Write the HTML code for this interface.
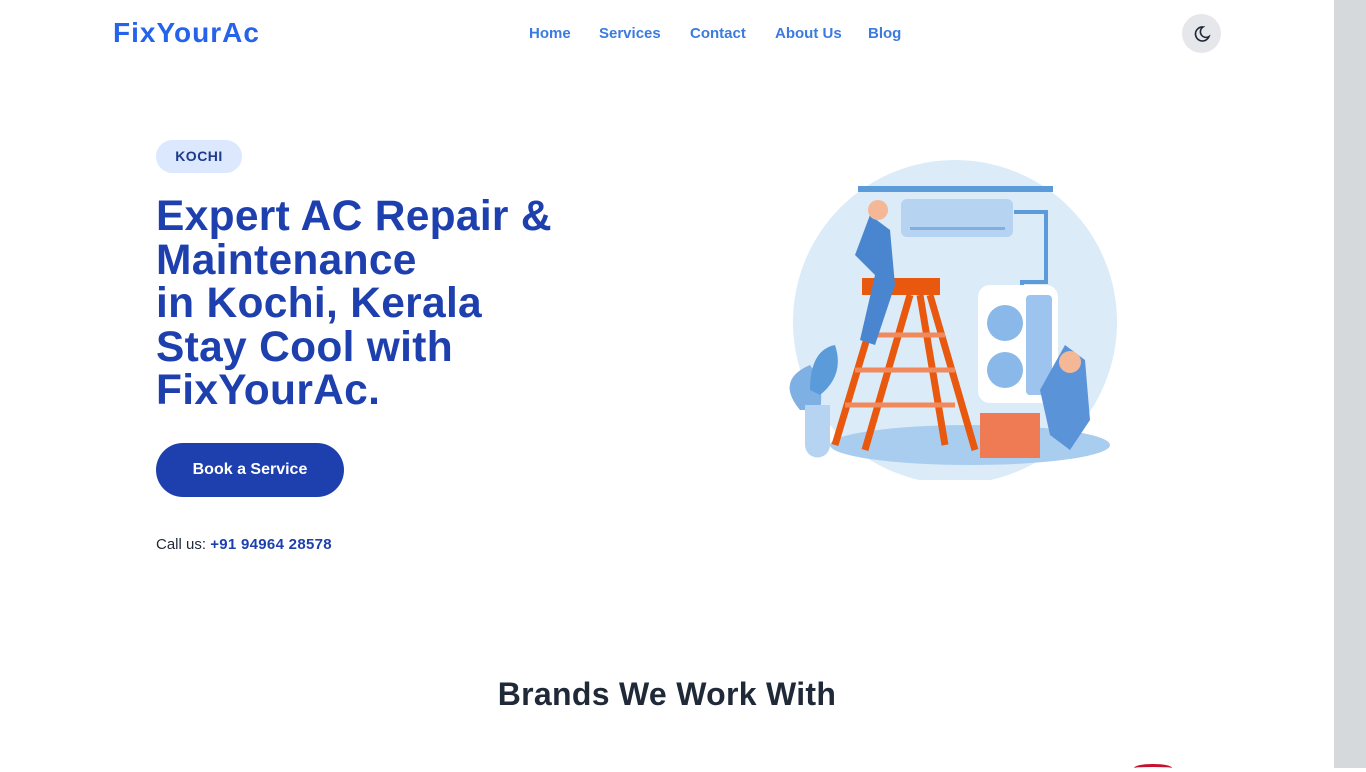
<!DOCTYPE html>
<html><head><meta charset="utf-8"><style>
*{margin:0;padding:0;box-sizing:border-box}
body{width:1366px;height:768px;overflow:hidden;background:#fff;font-family:"Liberation Sans",sans-serif;position:relative}
.sb{position:absolute;left:1334px;top:0;width:32px;height:768px;background:#d5d9db}
.logo{position:absolute;left:113px;top:17px;font-size:28px;font-weight:bold;color:#2563eb;letter-spacing:1px}
.nav{position:absolute;top:25px;font-size:15px;font-weight:bold;color:#3b7be0}
.moon{position:absolute;left:1182px;top:14px;width:39px;height:39px;border-radius:50%;background:#e5e7eb}
.pill{position:absolute;left:156px;top:140px;width:86px;height:33px;border-radius:17px;background:#dbe8fd;color:#1e3a8a;font-weight:bold;font-size:14px;text-align:center;line-height:33px;letter-spacing:.5px}
h1{position:absolute;left:156px;top:195px;font-size:42.5px;line-height:43.5px;color:#1e40af;font-weight:bold;letter-spacing:.3px}
.btn{position:absolute;left:156px;top:443px;width:188px;height:54px;border-radius:27px;background:#1e40af;color:#fff;font-size:16px;font-weight:bold;text-align:center;line-height:54px}
.call{position:absolute;left:156px;top:536px;font-size:15px;color:#1f2937}
.call b{color:#1e40af;letter-spacing:.3px}
h2{position:absolute;left:0;width:1334px;text-align:center;top:676px;font-size:32px;color:#1f2937;font-weight:bold;letter-spacing:.3px}
</style></head><body>
<div class="sb"></div>
<div class="logo">FixYourAc</div>
<div class="nav" style="left:529px">Home</div>
<div class="nav" style="left:599px">Services</div>
<div class="nav" style="left:690px">Contact</div>
<div class="nav" style="left:775px">About Us</div>
<div class="nav" style="left:868px">Blog</div>
<div class="moon"><svg width="39" height="39" viewBox="0 0 39 39"><path d="M21 13a7 7 0 1 0 6 9.5A5.5 5.5 0 0 1 21 13z" fill="none" stroke="#1f2937" stroke-width="1.6"/></svg></div>
<div class="pill">KOCHI</div>
<h1>Expert AC Repair &amp;<br>Maintenance<br>in Kochi, Kerala<br>Stay Cool with<br>FixYourAc.</h1>
<div class="btn">Book a Service</div>
<div class="call">Call us: <b>+91 94964 28578</b></div>
<h2>Brands We Work With</h2>
<svg style="position:absolute;left:770px;top:150px" width="360" height="330" viewBox="0 0 360 330">
<circle cx="185" cy="172" r="162" fill="#dcebf8"/>
<ellipse cx="200" cy="295" rx="140" ry="20" fill="#a9cdef"/>
<rect x="88" y="36" width="195" height="6" fill="#5b9bd9"/>
<rect x="131" y="49" width="112" height="38" rx="6" fill="#b6d4f2"/>
<rect x="140" y="77" width="95" height="3" fill="#7fb0e3"/>
<path d="M244 62h32v70h-24v10" fill="none" stroke="#5b9bd9" stroke-width="4"/>
<rect x="208" y="135" width="80" height="118" rx="12" fill="#fff"/>
<rect x="256" y="145" width="26" height="100" rx="4" fill="#9cc4ee"/>
<circle cx="235" cy="173" r="18" fill="#8ab8e8"/>
<circle cx="235" cy="220" r="18" fill="#8ab8e8"/>
<rect x="92" y="128" width="78" height="17" fill="#e8580e"/>
<path d="M110 145L65 295M140 145L95 300M150 145L175 295M160 145L205 300" stroke="#e8580e" stroke-width="7"/>
<path d="M75 255h110M85 220h100M95 185h80" stroke="#f08a5d" stroke-width="5"/>
<path d="M100 65l-15 40l20 20l-15 65l15 5l20-60l-5-55z" fill="#4a86d0"/>
<circle cx="108" cy="60" r="10" fill="#f4b896"/>
<rect x="210" y="263" width="60" height="45" fill="#ee7b53"/>
<path d="M295 195l-25 45l10 45l20 15l20-30l-5-60z" fill="#5b93d9"/>
<circle cx="300" cy="212" r="11" fill="#f4b896"/>
<path d="M30 260q-25-30 10-45q15 20 10 45z" fill="#7fb0e3"/>
<path d="M40 240q0-40 25-45q10 30-15 50z" fill="#5b9bd9"/>
<path d="M35 255h25v40a12 12 0 0 1-25 0z" fill="#b6d4f2"/>
</svg>
<div style="position:absolute;left:1134px;top:764px;width:38px;height:8px;border-radius:50%;border-top:3px solid #c8102e"></div>
</body></html>
